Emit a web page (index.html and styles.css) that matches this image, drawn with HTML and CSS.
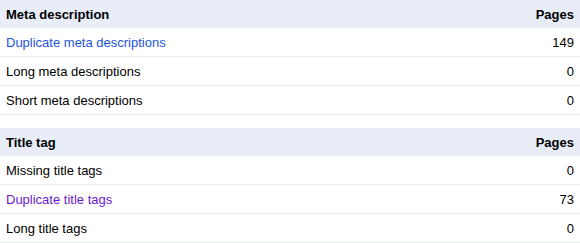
FILE: index.html
```html
<!DOCTYPE html>
<html lang="en">
<head>
    <meta charset="UTF-8">
    <meta name="viewport" content="width=device-width, initial-scale=1.0">
    <title>HTML suggestions</title>
    <link rel="stylesheet" href="styles.css">
</head>
<body>
    <table class="issues">
        <thead>
            <tr>
                <th class="label">Meta description</th>
                <th class="count">Pages</th>
            </tr>
        </thead>
        <tbody>
            <tr>
                <td class="label"><a href="#" class="link">Duplicate meta descriptions</a></td>
                <td class="count">149</td>
            </tr>
            <tr>
                <td class="label">Long meta descriptions</td>
                <td class="count">0</td>
            </tr>
            <tr>
                <td class="label">Short meta descriptions</td>
                <td class="count">0</td>
            </tr>
        </tbody>
    </table>

    <table class="issues">
        <thead>
            <tr>
                <th class="label">Title tag</th>
                <th class="count">Pages</th>
            </tr>
        </thead>
        <tbody>
            <tr>
                <td class="label">Missing title tags</td>
                <td class="count">0</td>
            </tr>
            <tr>
                <td class="label"><a href="#" class="link visited">Duplicate title tags</a></td>
                <td class="count">73</td>
            </tr>
            <tr>
                <td class="label">Long title tags</td>
                <td class="count">0</td>
            </tr>
        </tbody>
    </table>
</body>
</html>
```

FILE: styles.css
```css
body {
    margin: 0;
    font-family: "Liberation Sans", Arial, sans-serif;
    font-size: 13px;
    color: #000;
    background-color: #fff;
}
.issues {
    width: 100%;
    border-collapse: collapse;
}
.issues + .issues {
    margin-top: 13px;
}
.issues th {
    background-color: #e8edf8;
    font-weight: bold;
    height: 28px;
    padding: 0 6px;
}
.issues td {
    height: 28px;
    padding: 0 6px;
    border-bottom: 1px solid #e8edf8;
}
.issues .label {
    text-align: left;
}
.issues .count {
    text-align: right;
}
.link {
    color: #2255d8;
    text-decoration: none;
}
.link.visited {
    color: #6a1ad2;
}
```
